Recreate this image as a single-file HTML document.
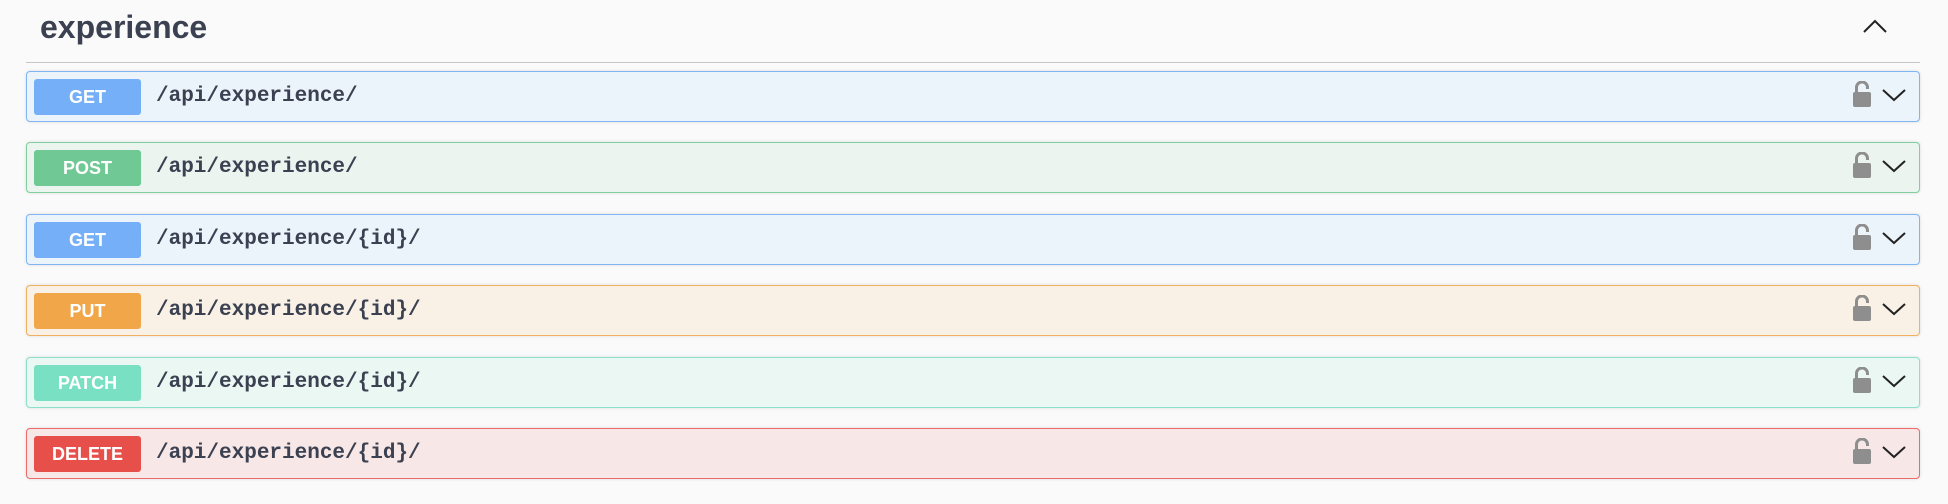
<!DOCTYPE html>
<html><head><style>
body{margin:0;background:#fafafa;width:1948px;height:504px;overflow:hidden;font-family:"Liberation Sans",sans-serif;position:relative}
h1{position:absolute;left:40px;top:9px;margin:0;font-size:32px;font-weight:bold;color:#3b4151}
.sep{position:absolute;left:26px;top:62px;width:1894px;height:1px;background:#c6c6c6}
.op{position:absolute;left:26px;width:1892px;height:49px;border:1px solid;border-radius:4px;box-shadow:0 0 3px rgba(0,0,0,.12)}
.b{position:absolute;left:7px;top:7px;width:107px;height:36px;border-radius:3px;color:#fff;font-weight:bold;font-size:18px;line-height:36px;text-align:center}
.p{position:absolute;left:129px;top:0;line-height:49px;font-family:"Liberation Mono","DejaVu Sans Mono",monospace;font-weight:bold;font-size:21px;color:#3b4151}
.i{position:absolute;left:1824px;top:9px}
</style></head><body>
<h1>experience</h1>
<svg style="position:absolute;left:1862px;top:19px" width="26" height="16"><path d="M2 13 L13 2 L24 13" fill="none" stroke="#222" stroke-width="2"/></svg>
<div class="sep"></div>

<div class="op" style="top:71px;background:#ebf3fb;border-color:#7fb5f5"><div class="b" style="background:#74aff8">GET</div><div class="p">/api/experience/</div>
<svg class="i" width="70" height="30"><path d="M5.5 12 V6.5 a5.5 5.5 0 0 1 11 0 V8" fill="none" stroke="#8e8e8e" stroke-width="3"/><rect x="2" y="11" width="18" height="15" rx="2" fill="#8e8e8e"/><path d="M32 9 L43 19 L54 9" fill="none" stroke="#222" stroke-width="2"/></svg></div>

<div class="op" style="top:142px;background:#ebf4ef;border-color:#7fcf9f"><div class="b" style="background:#70c995">POST</div><div class="p">/api/experience/</div>
<svg class="i" width="70" height="30"><path d="M5.5 12 V6.5 a5.5 5.5 0 0 1 11 0 V8" fill="none" stroke="#8e8e8e" stroke-width="3"/><rect x="2" y="11" width="18" height="15" rx="2" fill="#8e8e8e"/><path d="M32 9 L43 19 L54 9" fill="none" stroke="#222" stroke-width="2"/></svg></div>

<div class="op" style="top:214px;background:#ebf3fb;border-color:#7fb5f5"><div class="b" style="background:#74aff8">GET</div><div class="p">/api/experience/{id}/</div>
<svg class="i" width="70" height="30"><path d="M5.5 12 V6.5 a5.5 5.5 0 0 1 11 0 V8" fill="none" stroke="#8e8e8e" stroke-width="3"/><rect x="2" y="11" width="18" height="15" rx="2" fill="#8e8e8e"/><path d="M32 9 L43 19 L54 9" fill="none" stroke="#222" stroke-width="2"/></svg></div>

<div class="op" style="top:285px;background:#f9f1e6;border-color:#f0b060"><div class="b" style="background:#f0a649">PUT</div><div class="p">/api/experience/{id}/</div>
<svg class="i" width="70" height="30"><path d="M5.5 12 V6.5 a5.5 5.5 0 0 1 11 0 V8" fill="none" stroke="#8e8e8e" stroke-width="3"/><rect x="2" y="11" width="18" height="15" rx="2" fill="#8e8e8e"/><path d="M32 9 L43 19 L54 9" fill="none" stroke="#222" stroke-width="2"/></svg></div>

<div class="op" style="top:357px;background:#ebf7f3;border-color:#8ae0c8"><div class="b" style="background:#7ae0c3">PATCH</div><div class="p">/api/experience/{id}/</div>
<svg class="i" width="70" height="30"><path d="M5.5 12 V6.5 a5.5 5.5 0 0 1 11 0 V8" fill="none" stroke="#8e8e8e" stroke-width="3"/><rect x="2" y="11" width="18" height="15" rx="2" fill="#8e8e8e"/><path d="M32 9 L43 19 L54 9" fill="none" stroke="#222" stroke-width="2"/></svg></div>

<div class="op" style="top:428px;background:#f8e7e7;border-color:#ec6a6a"><div class="b" style="background:#e74f4a">DELETE</div><div class="p">/api/experience/{id}/</div>
<svg class="i" width="70" height="30"><path d="M5.5 12 V6.5 a5.5 5.5 0 0 1 11 0 V8" fill="none" stroke="#8e8e8e" stroke-width="3"/><rect x="2" y="11" width="18" height="15" rx="2" fill="#8e8e8e"/><path d="M32 9 L43 19 L54 9" fill="none" stroke="#222" stroke-width="2"/></svg></div>
</body></html>
